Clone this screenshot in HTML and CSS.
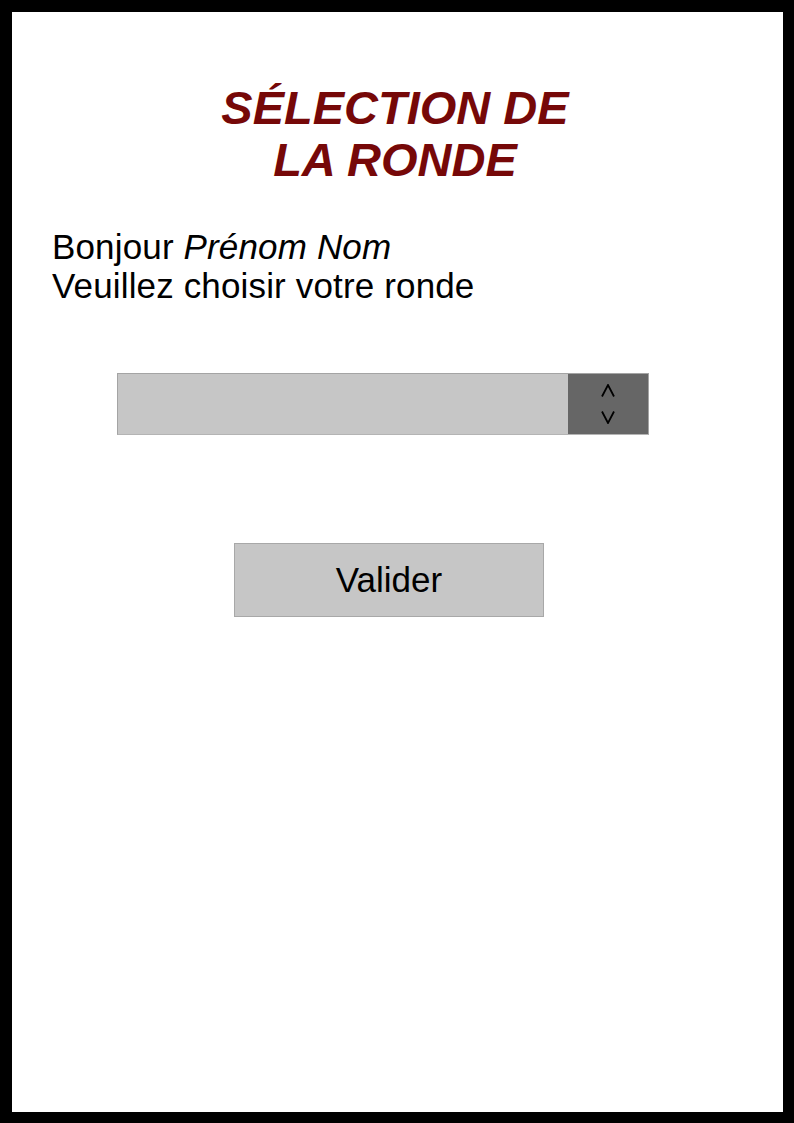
FILE: index.html
```html
<!DOCTYPE html>
<html lang="fr">
<head>
<meta charset="utf-8">
<title>Sélection de la ronde</title>
<link rel="stylesheet" href="styles.css">
</head>
<body>
<div class="page">
  <h1 class="title">SÉLECTION DE<br>LA RONDE</h1>
  <p class="greeting">Bonjour <em>Prénom Nom</em><br>Veuillez choisir votre ronde</p>
  <div class="select">
    <div class="field"></div>
    <div class="spinner">
      <svg class="arrow" width="14" height="13" viewBox="0 0 14 13"><polyline points="1,12.5 7,1 13,12.5" fill="none" stroke="#000" stroke-width="1.8"/></svg>
      <svg class="arrow" width="14" height="13" viewBox="0 0 14 13"><polyline points="1,0.5 7,12 13,0.5" fill="none" stroke="#000" stroke-width="1.8"/></svg>
    </div>
  </div>
  <button class="btn" type="button">Valider</button>
</div>
</body>
</html>
```

FILE: styles.css
```css
html, body {
  margin: 0;
  padding: 0;
  background: #000;
}
body {
  width: 794px;
  height: 1123px;
  box-sizing: border-box;
  padding: 12px 11px 11px 12px;
  font-family: "Liberation Sans", Arial, sans-serif;
}
.page {
  background: #fff;
  height: 1100px;
  display: flex;
  flex-direction: column;
  align-items: flex-start;
}
.title {
  align-self: stretch;
  margin: 70px 0 0 0;
  padding-right: 5px;
  text-align: center;
  font-size: 47px;
  line-height: 52px;
  font-weight: bold;
  font-style: italic;
  color: #760808;
}
.greeting {
  margin: 41px 0 0 40px;
  font-size: 35px;
  line-height: 39px;
  letter-spacing: 0.15px;
  color: #000;
}
.greeting em {
  font-style: italic;
}
.select {
  margin: 68px 0 0 105px;
  width: 532px;
  height: 62px;
  box-sizing: border-box;
  border: 1px solid #a4a4a4;
  border-bottom-color: #b4b4b4;
  display: flex;
  background: #c6c6c6;
}
.field {
  flex: 1;
}
.spinner {
  width: 80px;
  background: #666;
  display: flex;
  flex-direction: column;
  align-items: center;
  justify-content: center;
  gap: 14px;
}
.arrow {
  display: block;
}
.btn {
  margin: 108px 0 0 222px;
  width: 310px;
  height: 74px;
  box-sizing: border-box;
  background: #c6c6c6;
  border: 1px solid #a8a8a8;
  font-family: "Liberation Sans", Arial, sans-serif;
  font-size: 35px;
  color: #000;
  padding: 0;
}
```
